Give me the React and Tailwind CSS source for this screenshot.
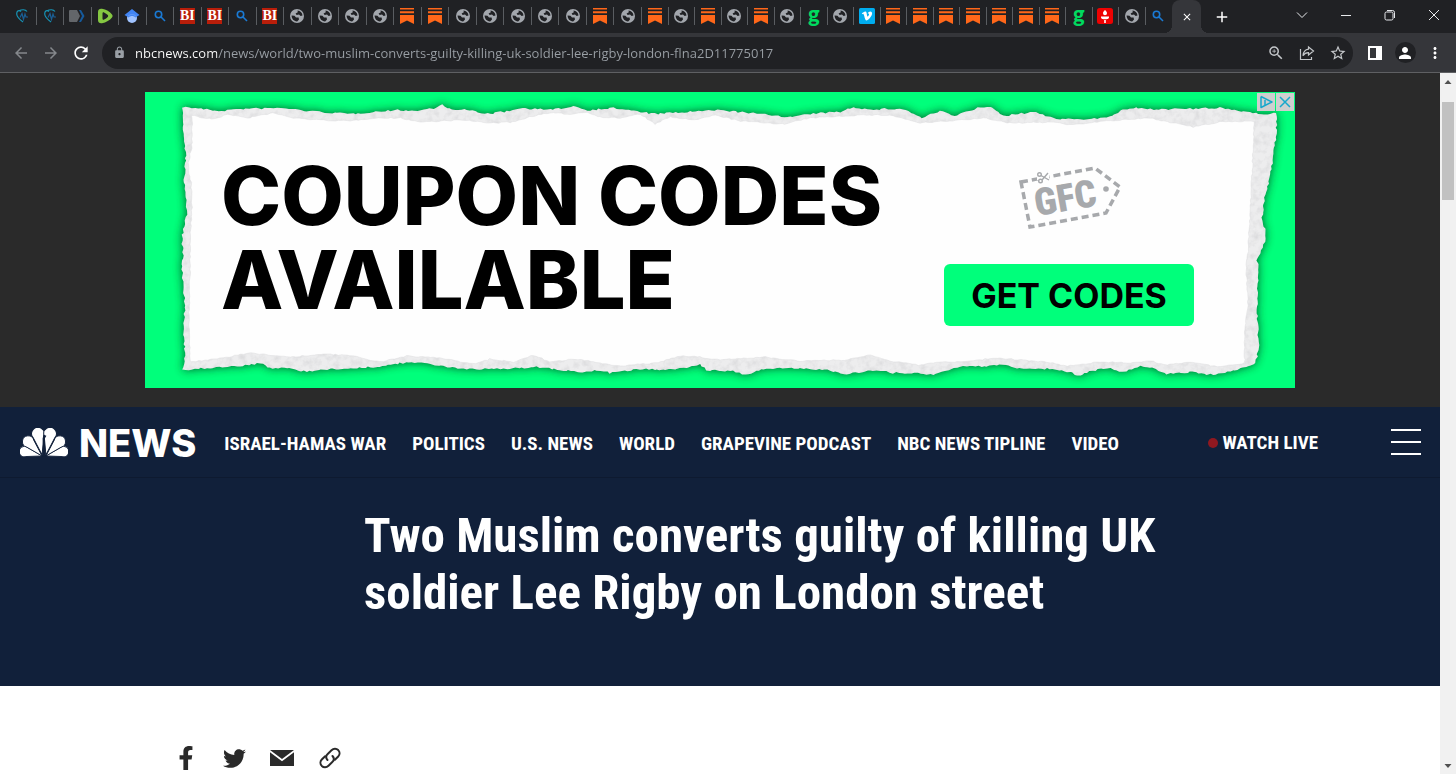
import React from "react";
import { FaFacebookF, FaTwitter } from "react-icons/fa";
import {
  MdAdd,
  MdArrowBack,
  MdArrowForward,
  MdClose,
  MdLock,
  MdMoreVert,
  MdPerson,
  MdRefresh,
  MdStarBorder,
  MdZoomIn,
} from "react-icons/md";

// Favicons of the open tabs, left to right. The first group is slightly wider.
const wideTabs = [
  "heart", "heart", "arrow", "rumble", "scholar", "search", "bi", "bi", "search", "bi",
  "globe", "globe", "globe", "globe", "substack", "substack",
  "globe", "globe", "globe", "globe", "globe", "substack", "globe",
];
const narrowTabs = [
  "substack", "globe", "substack", "globe", "substack", "globe", "g", "globe", "vimeo",
  "substack", "substack", "substack", "substack", "substack", "substack", "substack",
  "g", "torch", "globe", "search",
];

const navLinks = [
  "ISRAEL-HAMAS WAR",
  "POLITICS",
  "U.S. NEWS",
  "WORLD",
  "GRAPEVINE PODCAST",
  "NBC NEWS TIPLINE",
  "VIDEO",
];

// Outline of the torn sheet, clockwise from the top left corner
const sheetOutline = [
  [183, 107], [195, 108], [218, 111], [240, 109], [283, 108], [307, 111], [350, 114], [373, 112],
  [397, 110], [417, 111], [433, 108], [442, 105], [452, 110], [470, 110], [487, 114], [510, 111],
  [520, 108], [553, 110], [573, 106], [587, 110], [613, 108], [655, 114], [687, 112], [720, 110],
  [760, 114], [790, 117], [820, 113], [840, 112], [853, 107], [870, 110], [885, 109], [903, 109],
  [922, 118], [940, 111], [955, 116], [980, 107], [993, 108], [1003, 116], [1033, 112], [1057, 119],
  [1080, 119], [1107, 118], [1120, 111], [1133, 108], [1147, 109], [1190, 109], [1220, 108],
  [1247, 112], [1267, 114], [1276, 113], [1277, 122], [1275, 145], [1271, 172], [1265, 198],
  [1262, 218], [1266, 235], [1263, 248], [1257, 258], [1259, 275], [1257, 298], [1258, 332],
  [1259, 345], [1256, 363], [1243, 368], [1230, 372], [1207, 375], [1193, 372], [1167, 374],
  [1150, 367], [1140, 366], [1123, 372], [1107, 368], [1090, 371], [1080, 376], [1070, 372],
  [1053, 369], [1020, 368], [1000, 365], [987, 366], [957, 367], [933, 375], [918, 373], [893, 373],
  [883, 371], [867, 371], [847, 374], [827, 370], [810, 369], [767, 368], [745, 375], [733, 371],
  [707, 370], [700, 365], [683, 368], [660, 370], [640, 369], [610, 373], [597, 370], [583, 372],
  [560, 370], [540, 367], [507, 369], [467, 369], [447, 367], [427, 363], [400, 363], [380, 367],
  [327, 369], [307, 372], [287, 368], [270, 368], [260, 363], [240, 366], [207, 368], [183, 370],
  [185, 352], [183, 332], [185, 305], [182, 275], [183, 252], [182, 238], [187, 212], [186, 198],
  [184, 182], [186, 155], [184, 142],
];

// Clean white area inside the torn fibres
const sheetInner = [
  [192, 115], [203, 118], [215, 119], [227, 114], [247, 118], [273, 113], [293, 118], [320, 120],
  [350, 121], [373, 118], [400, 118], [420, 122], [460, 120], [493, 123], [513, 122], [533, 116],
  [550, 113], [570, 114], [587, 112], [600, 117], [620, 118], [640, 114], [655, 124], [670, 117],
  [695, 120], [715, 115], [740, 121], [785, 124], [810, 118], [860, 115], [890, 115], [920, 123],
  [950, 121], [983, 118], [1010, 123], [1057, 122], [1067, 125], [1107, 121], [1150, 118],
  [1193, 127], [1220, 122], [1254, 121], [1253, 152], [1250, 218], [1248, 252], [1246, 268],
  [1248, 302], [1244, 342], [1245, 363], [1217, 367], [1193, 362], [1167, 365], [1150, 361],
  [1133, 363], [1100, 362], [1067, 366], [1047, 362], [997, 358], [967, 361], [933, 363],
  [918, 365], [890, 361], [870, 355], [845, 360], [800, 361], [765, 357], [720, 360], [700, 357],
  [680, 356], [655, 363], [620, 366], [600, 363], [575, 359], [550, 362], [533, 355], [513, 362],
  [490, 359], [473, 364], [440, 358], [407, 356], [380, 362], [353, 356], [327, 354], [293, 357],
  [250, 353], [223, 358], [190, 362], [189, 318], [190, 272], [190, 238], [192, 208], [191, 182],
  [188, 165], [192, 145],
];

// Splits every edge into short steps and nudges them for a ragged look
const raggedPath = (points, amount) => {
  let seed = 7;
  const random = () => {
    seed = (seed * 16807) % 2147483647;
    return seed / 2147483647 - 0.5;
  };
  const out = [];
  points.forEach(([x, y], i) => {
    const [nx, ny] = points[(i + 1) % points.length];
    const steps = Math.max(1, Math.round(Math.hypot(nx - x, ny - y) / 3));
    for (let s = 0; s < steps; s++) {
      const px = x + ((nx - x) * s) / steps + random() * amount;
      const py = y + ((ny - y) * s) / steps + random() * amount;
      out.push(`${px.toFixed(1)} ${py.toFixed(1)}`);
    }
  });
  return `M${out.join("L")}Z`;
};

const outerPath = raggedPath(sheetOutline, 1.8);
const innerPath = raggedPath(sheetInner, 1.2);

const Favicon = ({ type }) => {
  switch (type) {
    case "heart":
      return (
        <svg viewBox="0 0 16 16" className="w-4 h-4" fill="none" stroke="#1793b4" strokeWidth="1.2">
          <path d="M7 3.500C5 1.500 2.500 3 2.700 6c.2 3 3 5.500 6.300 8" />
          <path d="M5 2.800c3-1.600 6.500-1.200 8 .7" />
          <path d="M6 9.500l2-4 1.500 6L11 6l1 3h2" stroke="#1a5f96" />
        </svg>
      );
    case "arrow":
      return (
        <svg viewBox="0 0 16 16" className="w-4 h-4">
          <path d="M0 3a1 1 0 0 1 1-1h7l3 6-3 6H1a1 1 0 0 1-1-1z" fill="#63666a" />
          <path d="M10 2h2l3.500 6-3.500 6h-2l3-6z" fill="#155a9c" />
        </svg>
      );
    case "rumble":
      return (
        <svg viewBox="0 0 16 16" className="w-4 h-4">
          <path d="M1 4C1 1 3 .5 5 .8c4 .6 8 3 10 5.700.8 1 .8 2 0 3-2 2.700-6 5-10 5.700-2 .3-4-.2-4-3.200z" fill="#85c742" />
          <path d="M5.500 5.500c0-1.200.8-1.500 1.600-1.100 1.300.7 2.700 1.600 3.700 2.700.5.600.5 1.200 0 1.800-1 1.100-2.400 2-3.700 2.700-.8.400-1.600.1-1.600-1.100z" fill="#202124" />
        </svg>
      );
    case "scholar":
      return (
        <svg viewBox="0 0 16 16" className="w-4 h-4">
          <circle cx="8" cy="10" r="5" fill="#a0c3ff" />
          <path d="M8 1L.5 7l4.200 2.500C6 7.500 10 7.500 11.300 9.500L15.500 7z" fill="#4285f4" />
          <path d="M3.500 8.800C5 5.500 11 5.500 12.500 8.800 11 7.500 9.500 6.800 8 6.800S5 7.500 3.500 8.800z" fill="#76a7fa" />
        </svg>
      );
    case "search":
      return (
        <svg viewBox="0 0 12 12" className="w-3 h-3" fill="none" stroke="#1a7ad4" strokeWidth="1.600">
          <circle cx="4.500" cy="4.500" r="3.200" />
          <path d="M7 7l4 4" />
        </svg>
      );
    case "bi":
      return (
        <span className="w-[15px] h-4 flex items-center justify-center bg-[#b91e0a] text-white font-['Liberation_Serif',serif] font-bold text-[14px] leading-none">
          BI
        </span>
      );
    case "substack":
      return (
        <svg viewBox="0 0 16 16" className="w-4 h-4" fill="#ff6719">
          <path d="M1 0h14v1.400H1zM1 3.200h14v2H1zM1 7h14v9L8 12.500 1 16z" />
        </svg>
      );
    case "g":
      return (
        <span className="h-5 font-[Lato,sans-serif] font-black text-[22px] leading-4 text-[#00d95f]">
          g
        </span>
      );
    case "vimeo":
      return (
        <svg viewBox="0 0 16 16" className="w-4 h-4">
          <rect x="0" y="0" width="16" height="16" rx="1.500" fill="#00adef" />
          <path d="M2.800 5.600l.6.700c.5-.4.800-.5 1-.4.900.5 1.400 6.500 3 6.500 1.800 0 5.600-4.400 5.700-7 .1-2.800-3.700-2.700-4.400.4 1.500-.6 1.700.4.900 1.800-.9 1.500-1.300 1.200-1.600-.4-.3-1.500-.4-3.700-1.700-3.600-1.200.1-2.300 1.100-3.500 2z" fill="#fff" />
        </svg>
      );
    case "torch":
      return (
        <svg viewBox="0 0 16 16" className="w-4 h-4">
          <rect x="0" y="0" width="16" height="16" rx="2.500" fill="#ee0202" />
          <path d="M8 2c1.700 1.700 2 2.300 2 3.200a2 2 0 0 1-4 0C6 4.300 6.300 3.700 8 2zM4 8.500h8v.8c0 1.200-1.200 2-2.500 2h-3C5.200 11.300 4 10.500 4 9.300zM7.200 12h1.600v3H7.200z" fill="#fff" />
        </svg>
      );
    default:
      return (
        <svg viewBox="0 0 16 16" className="w-4 h-4">
          <circle cx="8" cy="8" r="7" fill="#a3a7ad" />
          <path d="M8.500 2.500C11.200 2.800 13.300 4.800 13.500 7.400L11.600 8 10 6.600 7.600 7 6.600 5.400 8.800 4.300z" fill="#202124" />
          <path d="M2.600 7.600L5.500 7.800 7 9.400l2.600.2.400 1.800-1.800 2C5 13.600 2.600 11 2.600 7.600z" fill="#202124" />
        </svg>
      );
  }
};

const Tab = ({ type, last }) => (
  <button
    type="button"
    aria-label={`${type} tab`}
    className={`flex-1 h-[18px] min-w-0 flex items-center justify-center border-r ${
      last ? "border-transparent" : "border-[#5a5d61]"
    }`}
  >
    <Favicon type={type} />
  </button>
);

const TabStrip = () => (
  <div className="h-[33px] flex items-center bg-[#202124] pl-[9px]">
    <div className="w-[633px] h-8 self-start flex items-center">
      {wideTabs.map((type, i) => (
        <Tab key={i} type={type} />
      ))}
    </div>
    <div className="w-[530px] h-8 self-start flex items-center">
      {narrowTabs.map((type, i) => (
        <Tab key={i} type={type} last={i === narrowTabs.length - 1} />
      ))}
    </div>
    <div className="relative h-full w-[29px] bg-[#35363a] rounded-t-lg flex items-center justify-center">
      <span className="absolute bottom-0 -left-2 w-2 h-2 bg-[radial-gradient(circle_at_0_0,#202124_8px,#35363a_8px)]" />
      <span className="absolute bottom-0 -right-2 w-2 h-2 bg-[radial-gradient(circle_at_100%_0,#202124_8px,#35363a_8px)]" />
      <button type="button" aria-label="Close tab">
        <MdClose className="w-3 h-3 text-white" />
      </button>
    </div>
    <button type="button" aria-label="New tab" className="ml-3 text-white">
      <MdAdd className="w-[18px] h-[18px]" />
    </button>
    <div className="ml-auto flex h-full items-center pb-1 text-[#e8eaed]">
      <button type="button" aria-label="Search tabs" className="w-11 flex justify-center">
        <svg viewBox="0 0 12 12" className="w-3 h-3" fill="none" stroke="currentColor">
          <path d="M1 3.500l5 5 5-5" />
        </svg>
      </button>
      <button type="button" aria-label="Minimize" className="w-11 flex justify-center">
        <svg viewBox="0 0 12 12" className="w-3 h-3" fill="none" stroke="currentColor">
          <path d="M1 6.500h10" />
        </svg>
      </button>
      <button type="button" aria-label="Restore" className="w-11 flex justify-center">
        <svg viewBox="0 0 12 12" className="w-3 h-3" fill="none" stroke="currentColor">
          <rect x="1" y="3" width="8" height="8" rx="1.500" />
          <path d="M3 1.500h5.500a2 2 0 0 1 2 2V9" />
        </svg>
      </button>
      <button type="button" aria-label="Close" className="w-11 flex justify-center">
        <svg viewBox="0 0 12 12" className="w-3 h-3" fill="none" stroke="currentColor">
          <path d="M1 1l10 10M11 1L1 11" />
        </svg>
      </button>
    </div>
  </div>
);

const iconButton = "flex items-center justify-center";

const Toolbar = () => (
  <div className="h-10 flex items-center bg-[#35363a] border-b border-[#5f6063] px-[6px]">
    <button type="button" aria-label="Back" className={`${iconButton} w-[30px] text-[#85888c]`}>
      <MdArrowBack className="w-[18px] h-[18px]" />
    </button>
    <button type="button" aria-label="Forward" className={`${iconButton} w-[30px] text-[#85888c]`}>
      <MdArrowForward className="w-[18px] h-[18px]" />
    </button>
    <button type="button" aria-label="Reload" className={`${iconButton} w-[30px] text-white`}>
      <MdRefresh className="w-5 h-5" />
    </button>
    <div className="mx-[6px] flex-1 h-8 flex items-center rounded-full bg-[#202124] pl-[11px] text-[#c4c7ca]">
      <MdLock className="w-[13px] h-[13px] text-[#9aa0a6]" />
      <input
        type="text"
        aria-label="Address"
        defaultValue="nbcnews.com/news/world/two-muslim-converts-guilty-killing-uk-soldier-lee-rigby-london-flna2D11775017"
        className="flex-1 ml-[9px] font-['Open_Sans',sans-serif] text-[13px] leading-5 text-transparent bg-clip-text bg-[linear-gradient(to_right,#ffffff_82px,#9aa0a6_82px)] outline-none"
      />
      <button type="button" aria-label="Zoom" className={`${iconButton} w-[31px]`}>
        <MdZoomIn className="w-[18px] h-[18px]" />
      </button>
      <button type="button" aria-label="Share" className={`${iconButton} w-[31px]`}>
        <svg viewBox="0 0 16 16" className="w-4 h-4" fill="none" stroke="currentColor" strokeWidth="1.200">
          <path d="M1.500 4v10.500h11V12" />
          <path d="M9.500 2l5 4-5 4V7.700C7 7.700 5.200 8.700 4 10.800 4.300 7 6.300 4.600 9.500 4.200z" />
        </svg>
      </button>
      <button type="button" aria-label="Bookmark" className={`${iconButton} w-[31px]`}>
        <MdStarBorder className="w-[18px] h-[18px]" />
      </button>
    </div>
    <button type="button" aria-label="Side panel" className={`${iconButton} w-[31px]`}>
      <svg viewBox="0 0 14 14" className="w-[14px] h-[14px]">
        <rect x="0" y="0" width="14" height="14" fill="#fff" />
        <rect x="2" y="2" width="6" height="10" fill="#35363a" />
      </svg>
    </button>
    <button type="button" aria-label="Profile" className={`${iconButton} w-[30px]`}>
      <span className="w-[21px] h-[21px] rounded-full bg-[#202124] flex items-center justify-center">
        <MdPerson className="w-[18px] h-[18px] text-white" />
      </span>
    </button>
    <button type="button" aria-label="Menu" className={`${iconButton} w-[30px] text-white`}>
      <MdMoreVert className="w-[18px] h-[18px]" />
    </button>
  </div>
);

const CouponLogo = () => (
  <svg viewBox="0 0 104 66" className="w-[104px] h-[66px]">
    <path
      d="M4 17L78 3l25 19-14 26L13 62z"
      fill="none"
      stroke="#a7a9ac"
      strokeWidth="3.500"
      strokeDasharray="7 4"
    />
    <path d="M20 8l12-1v8H20z" fill="#fff" />
    <g fill="none" stroke="#a7a9ac" strokeWidth="1.400">
      <circle cx="22.500" cy="9.500" r="1.800" />
      <circle cx="23.500" cy="16" r="1.800" />
      <path d="M24 10.500l8 4.500M25 15l6-7" />
    </g>
    <circle cx="89" cy="24" r="2.800" fill="#a7a9ac" />
    <text
      x="48"
      y="46"
      textAnchor="middle"
      transform="rotate(-10 48 32)"
      className="font-['Roboto_Condensed',Roboto,sans-serif] font-black text-[38px] fill-[#a7a9ac]"
    >
      GFC
    </text>
  </svg>
);

const AdBanner = () => (
  <div className="bg-[#2a2a2a] py-[19px]">
    <div className="relative w-[1150px] max-w-full h-[296px] mx-auto bg-[#00ff7b] overflow-hidden">
      <svg viewBox="145 92 1150 296" className="absolute inset-0 w-full h-full">
        <defs>
          <filter id="shadow" x="-5%" y="-10%" width="110%" height="120%">
            <feGaussianBlur stdDeviation="5" />
          </filter>
          <filter id="fibres" x="0" y="0" width="100%" height="100%">
            <feTurbulence type="fractalNoise" baseFrequency="0.15" numOctaves="3" seed="4" />
            <feColorMatrix values="0 0 0 0 0.5  0 0 0 0 0.5  0 0 0 0 0.52  0.7 0 0 0 -0.28" />
            <feComposite in2="SourceGraphic" operator="in" />
          </filter>
        </defs>
        <path d={outerPath} fill="#004d20" opacity="0.9" filter="url(#shadow)" />
        <path d={outerPath} fill="#ededee" />
        <path d={outerPath} fill="#fff" filter="url(#fibres)" />
        <path d={innerPath} fill="#fefefe" stroke="#dcdcde" strokeWidth="0.500" />
      </svg>
      <div className="relative flex justify-between pl-[76px] pr-[101px]">
        <h2 className="pt-[62px] font-[Inter,sans-serif] font-extrabold text-[81px] leading-[84px] text-black whitespace-nowrap">
          COUPON CODES
          <br />
          AVAILABLE
        </h2>
        <div className="w-[250px] pt-[73px] flex flex-col items-center gap-[33px]">
          <CouponLogo />
          <button
            type="button"
            className="w-full h-[62px] rounded-md bg-[#00ff7b] font-[Inter,sans-serif] font-bold text-[34px] text-black"
          >
            GET CODES
          </button>
        </div>
      </div>
      <div className="absolute top-px right-px flex gap-px">
        <button type="button" aria-label="Ad choices" className="w-[18px] h-[18px] bg-[#cfcfcf]">
          <svg viewBox="0 0 18 18" className="w-full h-full" fill="none" stroke="#18a8cc" strokeWidth="1.500">
            <path d="M4 3.500v11L15 9 4 3.500" strokeLinejoin="round" />
            <path d="M8 7v5" />
          </svg>
        </button>
        <button type="button" aria-label="Close ad" className="w-[18px] h-[18px] bg-[#cfcfcf]">
          <svg viewBox="0 0 18 18" className="w-full h-full" stroke="#18a8cc" strokeWidth="1.500">
            <path d="M4 4l10 10M14 4L4 14" />
          </svg>
        </button>
      </div>
    </div>
  </div>
);

const feather = "M0 0L-4.500-15.500A5.200 5.200 0 1 1 4.500-15.500Z";

const Peacock = () => (
  <svg viewBox="0 0 50 30" className="w-12 h-[29px]" fill="#fff" stroke="#11203a" strokeWidth="0.800">
    <g transform="translate(23 29)">
      <path d={feather} transform="rotate(-76) scale(1.050)" />
      <path d={feather} transform="rotate(-44) scale(1.150)" />
      <path d={feather} transform="translate(0 -1) rotate(-11) scale(1.250)" />
    </g>
    <g transform="translate(27 29)">
      <path d={feather} transform="rotate(76) scale(1.050)" />
      <path d={feather} transform="rotate(44) scale(1.150)" />
      <path d={feather} transform="translate(0 -1) rotate(11) scale(1.250)" />
    </g>
    <path d="M25 30l-1.500-19 1-4 3 1-1.500 2.500z" fill="#11203a" stroke="none" />
  </svg>
);

const headingFont = "font-['Roboto_Condensed',Roboto,sans-serif] font-bold";

const NavBar = () => (
  <header className="h-[71px] flex items-center bg-[#11203a] border-b border-[#0e1a30] pl-5 pr-[19px] text-white">
    <a href="#" className="flex items-center">
      <Peacock />
      <span className="ml-[11px] pt-px font-[Inter,sans-serif] font-extrabold text-[38px] leading-10">NEWS</span>
    </a>
    <nav className={`ml-7 pt-1 flex gap-[26px] whitespace-nowrap text-[19px] leading-6 ${headingFont}`}>
      {navLinks.map((label) => (
        <a key={label} href="#">
          {label}
        </a>
      ))}
    </nav>
    <a
      href="#"
      className={`ml-auto mr-[73px] pt-[2px] flex items-center gap-1 whitespace-nowrap text-[19px] leading-6 ${headingFont}`}
    >
      <span className="w-[10px] h-[10px] rounded-full bg-[#8f1820]" />
      WATCH LIVE
    </a>
    <button type="button" aria-label="Open menu" className="w-[30px] flex flex-col gap-[10px]">
      <span className="w-full h-[2px] bg-white" />
      <span className="w-full h-[2px] bg-white" />
      <span className="w-full h-[2px] bg-white" />
    </button>
  </header>
);

const ShareRow = () => (
  <div className="flex items-center gap-6 pl-[174px] pt-[60px] text-[#2a2a2a]">
    <a href="#" aria-label="Facebook" className="w-6 h-6 flex items-center justify-center">
      <FaFacebookF className="w-6 h-6" />
    </a>
    <a href="#" aria-label="Twitter" className="w-6 h-6 flex items-center justify-center">
      <FaTwitter className="w-[23px] h-[23px]" />
    </a>
    <a href="#" aria-label="Email" className="w-6 h-6 flex items-center justify-center">
      <svg viewBox="0 0 24 16" className="w-6 h-4" fill="currentColor">
        <path d="M0 0h24L12 9z" />
        <path d="M0 2.200l12 9 12-9V16H0z" />
      </svg>
    </a>
    <a href="#" aria-label="Copy link" className="w-6 h-6 flex items-center justify-center">
      <svg viewBox="0 0 24 24" className="w-6 h-6" fill="none" stroke="currentColor" strokeWidth="2" strokeLinecap="round">
        <path d="M9.500 14c-1.800-2-1.600-4.300.2-6l3.800-3.700c2-1.900 4.900-1.900 6.700-.2 1.800 1.800 1.800 4.500 0 6.400l-3.300 3.200" />
        <path d="M14.500 10c1.800 2 1.600 4.300-.2 6l-3.800 3.700c-2 1.900-4.900 1.900-6.700.2-1.800-1.800-1.800-4.500 0-6.400l3.300-3.200" />
      </svg>
    </a>
  </div>
);

const ScrollBar = () => (
  <div className="w-4 flex flex-col items-center bg-[#f1f1f1]">
    <svg viewBox="0 0 16 17" className="w-4 h-[17px]" fill="#505050">
      <path d="M4.500 11L8 7l3.500 4z" />
    </svg>
    <div className="mt-3 w-3 h-[98px] bg-[#c1c1c1]" />
    <svg viewBox="0 0 16 17" className="mt-auto w-4 h-[17px]" fill="#505050">
      <path d="M4.500 7L8 11l3.500-4z" />
    </svg>
  </div>
);

const App = () => {
  return (
    <div className="h-screen flex flex-col overflow-hidden bg-white">
      <TabStrip />
      <Toolbar />
      <div className="flex-1 min-h-0 flex">
        <main className="flex-1 min-w-0 overflow-hidden">
          <AdBanner />
          <NavBar />
          <section className="bg-[#11203a] pt-[29px] pb-[65px] pl-[364px]">
            <h1 className={`max-w-[840px] text-[49px] leading-[57px] text-white ${headingFont}`}>
              Two Muslim converts guilty of killing UK soldier Lee Rigby on London street
            </h1>
          </section>
          <ShareRow />
        </main>
        <ScrollBar />
      </div>
    </div>
  );
};

export default App;
